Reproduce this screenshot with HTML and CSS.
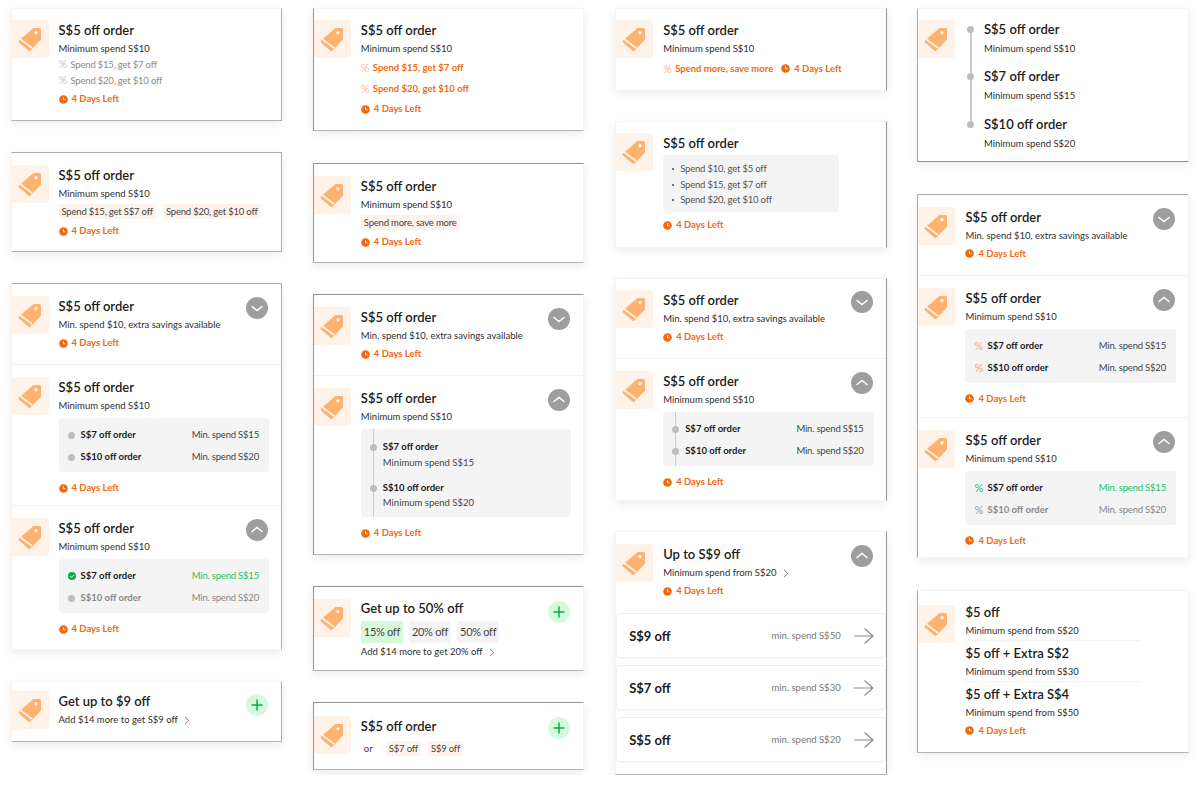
FILE: index.html
```html
<!DOCTYPE html>
<html lang="en">
<head>
    <meta charset="UTF-8">
    <title>Voucher card variants</title>
    <link rel="stylesheet" href="styles.css">
</head>
<body>
    <svg class="sprite" xmlns="http://www.w3.org/2000/svg">
        <symbol id="tag" viewBox="0 0 37 38">
            <path d="M21.5 8H27.5A1.5 1.5 0 0 1 29 9.5V19.5L18.5 30.5A1.6 1.6 0 0 1 16.3 30.6L7 22.6A1.6 1.6 0 0 1 7 20.4Z" fill="#ffb26f"/>
            <path d="M8 19L20 28" stroke="#fff3ea" stroke-width="1.6" fill="none"/>
            <circle cx="24" cy="12.7" r="1.7" fill="#fff3ea"/>
        </symbol>
        <symbol id="clock" viewBox="0 0 10 10">
            <circle cx="5" cy="5" r="4.8" fill="#f26a0f"/>
            <path d="M5 2.6V5.3H7.3" stroke="#fff" stroke-width="1" fill="none"/>
        </symbol>
        <symbol id="down" viewBox="0 0 22 22">
            <circle cx="11" cy="11" r="11" fill="#9e9e9e"/>
            <path d="M6 9.500L11 13.500L16 9.500" stroke="#fff" stroke-width="1.5" fill="none" stroke-linecap="round"/>
        </symbol>
        <symbol id="up" viewBox="0 0 22 22">
            <circle cx="11" cy="11" r="11" fill="#9e9e9e"/>
            <path d="M6 12.500L11 8.500L16 12.500" stroke="#fff" stroke-width="1.5" fill="none" stroke-linecap="round"/>
        </symbol>
        <symbol id="plus" viewBox="0 0 22 22">
            <circle cx="11" cy="11" r="11" fill="#d6f9dc"/>
            <path d="M11 5.500V16.500M5.500 11H16.500" stroke="#00b14f" stroke-width="1.500" fill="none"/>
        </symbol>
        <symbol id="check" viewBox="0 0 10 10">
            <circle cx="5" cy="5" r="5" fill="#00b14f"/>
            <path d="M2.800 5.100L4.400 6.700L7.300 3.600" stroke="#fff" stroke-width="1.200" fill="none"/>
        </symbol>
        <symbol id="caret" viewBox="0 0 6 9">
            <path d="M1 .8L4.800 4.500L1 8.200" stroke="#777" stroke-width="1" fill="none"/>
        </symbol>
        <symbol id="arrow" viewBox="0 0 20 16">
            <path d="M0 8H19M10.500 .5L19 8L10.500 15.500" stroke="#8a8a8a" stroke-width="1.200" fill="none"/>
        </symbol>
    </svg>

    <main class="board">
        <!-- column 1 -->
        <section class="column col-a">
            <article class="card edge-r edge-b">
                <div class="row first-flush">
                    <svg class="tag"><use href="#tag"/></svg>
                    <div class="body">
                        <h3>S$5 off order</h3>
                        <p class="min">Minimum spend S$10</p>
                        <p class="perk"><span class="pct">%</span>Spend $15, get $7 off</p>
                        <p class="perk"><span class="pct">%</span>Spend $20, get $10 off</p>
                        <p class="left gap-3"><svg class="clock"><use href="#clock"/></svg>4 Days Left</p>
                    </div>
                </div>
            </article>
            <article class="card edge-t edge-r edge-b">
                <div class="row snug">
                    <svg class="tag"><use href="#tag"/></svg>
                    <div class="body">
                        <h3>S$5 off order</h3>
                        <p class="min">Minimum spend S$10</p>
                        <div class="chips"><span class="chip">Spend $15, get S$7 off</span><span class="chip">Spend $20, get $10 off</span></div>
                        <p class="left gap-5"><svg class="clock"><use href="#clock"/></svg>4 Days Left</p>
                    </div>
                </div>
            </article>
            <article class="card edge-t edge-r">
                <div class="row">
                    <svg class="tag"><use href="#tag"/></svg>
                    <div class="body">
                        <div class="head"><h3>S$5 off order</h3><svg class="toggle"><use href="#down"/></svg></div>
                        <p class="min">Min. spend $10, extra savings available</p>
                        <p class="left gap-4"><svg class="clock"><use href="#clock"/></svg>4 Days Left</p>
                    </div>
                </div>
                <div class="row open">
                    <svg class="tag"><use href="#tag"/></svg>
                    <div class="body">
                        <h3>S$5 off order</h3>
                        <p class="min">Minimum spend S$10</p>
                        <div class="panel">
                            <div class="tier"><span class="tier-name"><i class="dot"></i>S$7 off order</span><span class="tier-min">Min. spend S$15</span></div>
                            <div class="tier"><span class="tier-name"><i class="dot"></i>S$10 off order</span><span class="tier-min">Min. spend S$20</span></div>
                        </div>
                        <p class="left gap-9"><svg class="clock"><use href="#clock"/></svg>4 Days Left</p>
                    </div>
                </div>
                <div class="row open">
                    <svg class="tag"><use href="#tag"/></svg>
                    <div class="body">
                        <div class="head"><h3>S$5 off order</h3><svg class="toggle"><use href="#up"/></svg></div>
                        <p class="min">Minimum spend S$10</p>
                        <div class="panel">
                            <div class="tier reached"><span class="tier-name"><svg class="dot-icon"><use href="#check"/></svg>S$7 off order</span><span class="tier-min">Min. spend S$15</span></div>
                            <div class="tier muted"><span class="tier-name"><i class="dot"></i>S$10 off order</span><span class="tier-min">Min. spend S$20</span></div>
                        </div>
                        <p class="left gap-9"><svg class="clock"><use href="#clock"/></svg>4 Days Left</p>
                    </div>
                </div>
            </article>
            <article class="card edge-r edge-b">
                <div class="row short">
                    <svg class="tag"><use href="#tag"/></svg>
                    <div class="body">
                        <div class="head"><h3>Get up to $9 off</h3><svg class="toggle drop"><use href="#plus"/></svg></div>
                        <p class="min more">Add $14 more to get S$9 off<svg class="caret"><use href="#caret"/></svg></p>
                    </div>
                </div>
            </article>
        </section>

        <!-- column 2 -->
        <section class="column col-b">
            <article class="card edge-l edge-b">
                <div class="row first-flush">
                    <svg class="tag"><use href="#tag"/></svg>
                    <div class="body">
                        <h3>S$5 off order</h3>
                        <p class="min">Minimum spend S$10</p>
                        <p class="left perk-hot"><span class="pct">%</span>Spend $15, get $7 off</p>
                        <p class="left perk-hot"><span class="pct">%</span>Spend $20, get $10 off</p>
                        <p class="left gap-3"><svg class="clock"><use href="#clock"/></svg>4 Days Left</p>
                    </div>
                </div>
            </article>
            <article class="card edge-t edge-l edge-b">
                <div class="row snug">
                    <svg class="tag"><use href="#tag"/></svg>
                    <div class="body">
                        <h3>S$5 off order</h3>
                        <p class="min">Minimum spend S$10</p>
                        <div class="chips"><span class="chip">Spend more, save more</span></div>
                        <p class="left gap-5"><svg class="clock"><use href="#clock"/></svg>4 Days Left</p>
                    </div>
                </div>
            </article>
            <article class="card edge-t edge-l edge-b">
                <div class="row">
                    <svg class="tag"><use href="#tag"/></svg>
                    <div class="body">
                        <div class="head"><h3>S$5 off order</h3><svg class="toggle"><use href="#down"/></svg></div>
                        <p class="min">Min. spend $10, extra savings available</p>
                        <p class="left gap-4"><svg class="clock"><use href="#clock"/></svg>4 Days Left</p>
                    </div>
                </div>
                <div class="row open">
                    <svg class="tag"><use href="#tag"/></svg>
                    <div class="body">
                        <div class="head"><h3>S$5 off order</h3><svg class="toggle"><use href="#up"/></svg></div>
                        <p class="min">Minimum spend S$10</p>
                        <div class="panel rail">
                            <div class="rail-line rail-tall">
                                <div class="rail-item"><b>S$7 off order</b><span>Minimum spend S$15</span></div>
                                <div class="rail-item"><b>S$10 off order</b><span>Minimum spend S$20</span></div>
                            </div>
                        </div>
                        <p class="left gap-9"><svg class="clock"><use href="#clock"/></svg>4 Days Left</p>
                    </div>
                </div>
            </article>
            <article class="card edge-t edge-l edge-b">
                <div class="row rates-row">
                    <svg class="tag drop-1"><use href="#tag"/></svg>
                    <div class="body">
                        <div class="head"><h3>Get up to 50% off</h3><svg class="toggle drop"><use href="#plus"/></svg></div>
                        <div class="rates"><span class="rate on">15% off</span><span class="rate">20% off</span><span class="rate">50% off</span></div>
                        <p class="min more">Add $14 more to get 20% off<svg class="caret"><use href="#caret"/></svg></p>
                    </div>
                </div>
            </article>
            <article class="card edge-t edge-l edge-b">
                <div class="row or-row">
                    <svg class="tag"><use href="#tag"/></svg>
                    <div class="body">
                        <div class="head"><h3>S$5 off order</h3><svg class="toggle"><use href="#plus"/></svg></div>
                        <div class="chips or-chips"><span class="or">or</span><span class="chip">S$7 off</span><span class="chip">S$9 off</span></div>
                    </div>
                </div>
            </article>
        </section>

        <!-- column 3 -->
        <section class="column col-c">
            <article class="card edge-r">
                <div class="row first-flush tight">
                    <svg class="tag"><use href="#tag"/></svg>
                    <div class="body">
                        <h3>S$5 off order</h3>
                        <p class="min">Minimum spend S$10</p>
                        <div class="inline-meta">
                            <p class="left perk-hot"><span class="pct">%</span>Spend more, save more</p>
                            <p class="left"><svg class="clock"><use href="#clock"/></svg>4 Days Left</p>
                        </div>
                    </div>
                </div>
            </article>
            <article class="card edge-r">
                <div class="row first-flush roomy">
                    <svg class="tag"><use href="#tag"/></svg>
                    <div class="body">
                        <h3>S$5 off order</h3>
                        <ul class="panel bullets">
                            <li>Spend $10, get $5 off</li>
                            <li>Spend $15, get $7 off</li>
                            <li>Spend $20, get $10 off</li>
                        </ul>
                        <p class="left gap-6"><svg class="clock"><use href="#clock"/></svg>4 Days Left</p>
                    </div>
                </div>
            </article>
            <article class="card edge-r">
                <div class="row first-flush">
                    <svg class="tag"><use href="#tag"/></svg>
                    <div class="body">
                        <div class="head"><h3>S$5 off order</h3><svg class="toggle"><use href="#down"/></svg></div>
                        <p class="min">Min. spend $10, extra savings available</p>
                        <p class="left gap-4"><svg class="clock"><use href="#clock"/></svg>4 Days Left</p>
                    </div>
                </div>
                <div class="row open">
                    <svg class="tag"><use href="#tag"/></svg>
                    <div class="body">
                        <div class="head"><h3>S$5 off order</h3><svg class="toggle"><use href="#up"/></svg></div>
                        <p class="min">Minimum spend S$10</p>
                        <div class="panel rail">
                            <div class="rail-line">
                                <div class="tier"><span class="tier-name rail-dot">S$7 off order</span><span class="tier-min">Min. spend S$15</span></div>
                                <div class="tier"><span class="tier-name rail-dot">S$10 off order</span><span class="tier-min">Min. spend S$20</span></div>
                            </div>
                        </div>
                        <p class="left gap-9"><svg class="clock"><use href="#clock"/></svg>4 Days Left</p>
                    </div>
                </div>
            </article>
            <article class="card edge-r edge-b">
                <div class="row roomy">
                    <svg class="tag"><use href="#tag"/></svg>
                    <div class="body">
                        <div class="head"><h3>Up to S$9 off</h3><svg class="toggle"><use href="#up"/></svg></div>
                        <p class="min more">Minimum spend from S$20<svg class="caret"><use href="#caret"/></svg></p>
                        <p class="left gap-4"><svg class="clock"><use href="#clock"/></svg>4 Days Left</p>
                    </div>
                </div>
                <div class="offers">
                    <div class="offer"><strong>S$9 off</strong><span>min. spend S$50</span><svg class="arrow"><use href="#arrow"/></svg></div>
                    <div class="offer"><strong>S$7 off</strong><span>min. spend S$30</span><svg class="arrow"><use href="#arrow"/></svg></div>
                    <div class="offer"><strong>S$5 off</strong><span>min. spend S$20</span><svg class="arrow"><use href="#arrow"/></svg></div>
                </div>
            </article>
        </section>

        <!-- column 4 -->
        <section class="column col-d">
            <article class="card edge-l edge-b edge-dark">
                <div class="row first-flush tight">
                    <svg class="tag"><use href="#tag"/></svg>
                    <div class="body steps">
                        <div class="step"><h3>S$5 off order</h3><p class="min">Minimum spend S$10</p></div>
                        <div class="step"><h3>S$7 off order</h3><p class="min">Minimum spend S$15</p></div>
                        <div class="step"><h3>S$10 off order</h3><p class="min">Minimum spend S$20</p></div>
                    </div>
                </div>
            </article>
            <article class="card edge-t edge-l">
                <div class="row">
                    <svg class="tag"><use href="#tag"/></svg>
                    <div class="body">
                        <div class="head"><h3>S$5 off order</h3><svg class="toggle"><use href="#down"/></svg></div>
                        <p class="min">Min. spend $10, extra savings available</p>
                        <p class="left gap-4"><svg class="clock"><use href="#clock"/></svg>4 Days Left</p>
                    </div>
                </div>
                <div class="row open">
                    <svg class="tag"><use href="#tag"/></svg>
                    <div class="body">
                        <div class="head"><h3>S$5 off order</h3><svg class="toggle"><use href="#up"/></svg></div>
                        <p class="min">Minimum spend S$10</p>
                        <div class="panel">
                            <div class="tier"><span class="tier-name"><span class="tier-pct hot">%</span>S$7 off order</span><span class="tier-min">Min. spend S$15</span></div>
                            <div class="tier"><span class="tier-name"><span class="tier-pct hot">%</span>S$10 off order</span><span class="tier-min">Min. spend S$20</span></div>
                        </div>
                        <p class="left gap-9"><svg class="clock"><use href="#clock"/></svg>4 Days Left</p>
                    </div>
                </div>
                <div class="row open">
                    <svg class="tag"><use href="#tag"/></svg>
                    <div class="body">
                        <div class="head"><h3>S$5 off order</h3><svg class="toggle"><use href="#up"/></svg></div>
                        <p class="min">Minimum spend S$10</p>
                        <div class="panel">
                            <div class="tier reached"><span class="tier-name"><span class="tier-pct go">%</span>S$7 off order</span><span class="tier-min">Min. spend S$15</span></div>
                            <div class="tier muted"><span class="tier-name"><span class="tier-pct">%</span>S$10 off order</span><span class="tier-min">Min. spend S$20</span></div>
                        </div>
                        <p class="left gap-9"><svg class="clock"><use href="#clock"/></svg>4 Days Left</p>
                    </div>
                </div>
            </article>
            <article class="card edge-l edge-b">
                <div class="row first-flush">
                    <svg class="tag drop-3"><use href="#tag"/></svg>
                    <div class="body stack">
                        <div class="stack-item"><h3>$5 off</h3><p class="min">Minimum spend from S$20</p></div>
                        <div class="stack-item"><h3>$5 off + Extra S$2</h3><p class="min">Minimum spend from S$30</p></div>
                        <div class="stack-item"><h3>$5 off + Extra S$4</h3><p class="min">Minimum spend from S$50</p></div>
                        <p class="left gap-4"><svg class="clock"><use href="#clock"/></svg>4 Days Left</p>
                    </div>
                </div>
            </article>
        </section>
    </main>
</body>
</html>
```

FILE: styles.css
```css
:root {
    --ink: #1c1c1c;
    --text: #3c3c3c;
    --orange: #f26a0f;
    --green: #1fbf63;
    --line: #f3f3f3;
    --edge: #ababab;
}

* {
    box-sizing: border-box;
    margin: 0;
    padding: 0;
}

body {
    font-family: 'Lato', sans-serif;
    background-color: #fff;
    color: var(--text);
    overflow: hidden;
}

.sprite {
    display: none;
}

.board {
    display: grid;
    grid-template-columns: repeat(4, 271.5px);
    column-gap: 30.83px;
    padding: 8px 0 0 10.5px;
    align-items: start;
}

.column {
    display: flex;
    flex-direction: column;
    gap: 31px;
}

.col-b,
.col-c {
    --edge: #949494;
}

.col-b .card:first-child {
    margin-bottom: 1px;
}

.col-c {
    gap: 30px;
}

.col-d {
    gap: 32px;
}

/* cards */
.card {
    background-color: #fff;
    border: 1px solid #f4f4f4;
    box-shadow: 0 3px 9px rgba(0, 0, 0, 0.08);
}

.edge-t {
    border-top-color: var(--edge);
}

.edge-r {
    border-right-color: var(--edge);
}

.edge-b {
    border-bottom-color: #b4b4b4;
}

.edge-l {
    border-left-color: var(--edge);
}

.edge-dark {
    border-bottom-color: #8c8c8c;
}

.row {
    display: flex;
    gap: 10px;
    padding: 12px 12px 14px 0;
}

.row + .row {
    border-top: 1px solid var(--line);
}

.first-flush {
    padding-top: 11px;
}

.short {
    padding-top: 9px;
    padding-bottom: 12px;
}

.snug {
    padding-bottom: 13px;
}

.tight {
    padding-bottom: 11px;
}

.roomy {
    padding-bottom: 15px;
}

.rates-row {
    padding-top: 11px;
    padding-bottom: 11px;
}

.or-row {
    padding-top: 13px;
    padding-bottom: 13px;
}

.open {
    padding-bottom: 10px;
}

.col-a .open:last-child {
    padding-bottom: 13px;
}

.col-b .open:last-child {
    padding-bottom: 14px;
}

.col-c .open:last-child {
    padding-bottom: 11px;
}

.col-d .open {
    padding-bottom: 11px;
}

.col-d .open:last-child {
    padding-bottom: 9px;
}

.tag {
    width: 37px;
    height: 38px;
    flex: none;
    background-color: #fff2e8;
    border-radius: 0 3px 3px 0;
}

.drop-1 {
    margin-top: 1px;
}

.drop-3 {
    margin-top: 3px;
}

.body {
    flex: 1;
    min-width: 0;
}

h3 {
    font-size: 13px;
    line-height: 20px;
    font-weight: 600;
    color: var(--ink);
}

.head {
    display: flex;
    justify-content: space-between;
}

.toggle {
    width: 22px;
    height: 22px;
    margin: 1px 1px -14px 0;
    flex: none;
}

.toggle.drop {
    margin-top: 3px;
}

p {
    font-size: 9.5px;
}

.min {
    line-height: 14px;
    margin-top: 2px;
    color: #2e2e2e;
}

.more {
    display: flex;
    align-items: center;
}

.caret {
    width: 6px;
    height: 9px;
    margin-left: 6px;
}

.perk {
    line-height: 16px;
    letter-spacing: -0.2px;
    color: #8a8a8a;
}

.min + .perk {
    margin-top: 1px;
}

.pct {
    display: inline-block;
    width: 12px;
    font-size: 11px;
    line-height: 1;
    font-weight: 300;
    opacity: 0.75;
}

.left {
    display: flex;
    align-items: center;
    line-height: 14px;
    font-weight: 700;
    color: var(--orange);
}

.clock {
    width: 9px;
    height: 9px;
    margin-right: 4px;
}

.perk-hot {
    line-height: 21px;
}

.min + .perk-hot {
    margin-top: 1px;
}

.gap-3 {
    margin-top: 3px;
}

.gap-4 {
    margin-top: 4px;
}

.gap-5 {
    margin-top: 5px;
}

.gap-6 {
    margin-top: 6px;
}

.gap-9 {
    margin-top: 9px;
}

/* chips */
.chips {
    display: flex;
    gap: 7px;
    margin-top: 3px;
}

.chip {
    flex: none;
    white-space: nowrap;
    font-size: 9.5px;
    line-height: 15px;
    letter-spacing: -0.2px;
    padding: 0 3px;
    border-radius: 2px;
    background-color: #fdf3ec;
    color: #444;
}

.or-chips {
    margin-top: 5px;
}

.or {
    font-size: 9.5px;
    line-height: 15px;
    width: 18px;
    padding-left: 3px;
}

.rates {
    display: flex;
    gap: 6px;
    margin-top: 3px;
}

.rate {
    font-size: 11px;
    line-height: 22px;
    letter-spacing: -0.3px;
    padding: 0 3px;
    background-color: #f4f4f4;
    color: #444;
}

.rate.on {
    background-color: #d6f9dc;
}

/* grey panels */
.panel {
    margin-top: 5px;
    padding: 6px 10px 4px 9px;
    background-color: #f4f4f4;
    border-radius: 3px;
}

.tier {
    display: flex;
    justify-content: space-between;
    font-size: 9.5px;
    line-height: 22px;
}

.tier-name {
    display: flex;
    align-items: center;
    font-weight: 700;
    color: var(--ink);
}

.tier-min {
    letter-spacing: -0.2px;
    color: #444;
}

.dot {
    width: 7px;
    height: 7px;
    margin: 0 6px 0 0;
    border-radius: 50%;
    background-color: #bdbdbd;
}

.dot-icon {
    width: 8px;
    height: 8px;
    margin-right: 5px;
}

.tier-pct {
    width: 13px;
    font-size: 11px;
    font-weight: 400;
    color: #999;
}

.tier-pct.hot {
    color: #ffa362;
}

.tier-pct.go {
    color: var(--green);
}

.reached .tier-min {
    color: var(--green);
}

.muted .tier-name,
.muted .tier-min {
    color: #888;
}

.bullets {
    list-style: none;
    width: 176px;
    margin-top: 2px;
    padding: 6px 10px 4.500px 9px;
}

.bullets li {
    position: relative;
    font-size: 9.5px;
    line-height: 15.500px;
    letter-spacing: -0.2px;
    padding-left: 8px;
    color: #555;
}

.bullets li::before {
    content: '';
    position: absolute;
    left: 0;
    top: 7px;
    width: 2px;
    height: 2px;
    border-radius: 50%;
    background-color: #444;
}

.rail {
    padding: 0 10px 0 12px;
}

.rail-line {
    border-left: 1px solid #ccc;
    padding: 6px 0 4px 9px;
}

.rail-dot,
.rail-item {
    position: relative;
}

.rail-dot::before,
.rail-item::before {
    content: '';
    position: absolute;
    left: -13px;
    top: 8px;
    width: 7px;
    height: 7px;
    border-radius: 50%;
    background-color: #bdbdbd;
}

.rail-item::before {
    top: 4px;
}

.rail-tall {
    padding: 11px 0 7px 9px;
}

.rail-item {
    display: flex;
    flex-direction: column;
    font-size: 9.5px;
    line-height: 14px;
    margin-bottom: 11px;
}

.rail-item:last-child {
    margin-bottom: 0;
}

.rail-item b {
    font-weight: 700;
    color: var(--ink);
}

.rail-item span {
    margin-top: 1.500px;
    color: #444;
}

.inline-meta {
    display: flex;
    gap: 8px;
    margin-top: 2px;
}

/* offer list */
.offers {
    display: flex;
    flex-direction: column;
    gap: 7px;
    padding: 0 0 12px;
}

.offer {
    display: flex;
    align-items: center;
    height: 45px;
    padding: 0 11px 0 12px;
    border: 1px solid #efefef;
    border-radius: 4px;
    box-shadow: 0 1px 2px rgba(0, 0, 0, 0.04);
}

.offer strong {
    flex: 1;
    font-size: 13px;
    font-weight: 700;
    color: var(--ink);
}

.offer span {
    font-size: 9.5px;
    color: #777;
}

.arrow {
    width: 20px;
    height: 16px;
    margin-left: 13px;
}

/* timeline in the last column */
.steps {
    position: relative;
    margin-top: -1px;
    padding-left: 18.500px;
}

.steps::before {
    content: '';
    position: absolute;
    left: 5px;
    top: 11px;
    height: 94px;
    border-left: 2px solid #ccc;
}

.step {
    position: relative;
    height: 47.300px;
}

.step:last-child {
    height: 36px;
}

.step .min {
    margin-top: 3px;
}

.step::before {
    content: '';
    position: absolute;
    left: -16.500px;
    top: 7px;
    width: 7px;
    height: 7px;
    border-radius: 50%;
    background-color: #bdbdbd;
}

.stack {
    padding-right: 35px;
}

.stack-item + .stack-item {
    margin-top: 2px;
    padding-top: 2px;
    border-top: 1px solid var(--line);
}
```
